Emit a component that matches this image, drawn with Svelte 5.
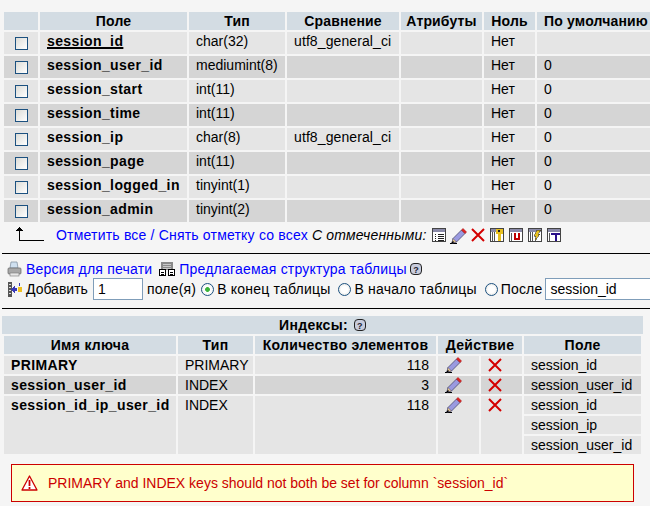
<script>
    const fields = [
        { name: 'session_id', type: 'char(32)', coll: 'utf8_general_ci', def: '', key: true },
        { name: 'session_user_id', type: 'mediumint(8)', coll: '', def: '0' },
        { name: 'session_start', type: 'int(11)', coll: '', def: '0' },
        { name: 'session_time', type: 'int(11)', coll: '', def: '0' },
        { name: 'session_ip', type: 'char(8)', coll: 'utf8_general_ci', def: '0' },
        { name: 'session_page', type: 'int(11)', coll: '', def: '0' },
        { name: 'session_logged_in', type: 'tinyint(1)', coll: '', def: '0' },
        { name: 'session_admin', type: 'tinyint(2)', coll: '', def: '0' },
    ];
</script>

{#snippet pencil()}
    <svg class="ico" width="17" height="16" viewBox="0 0 17 16">
        <path d="M0 15.500h7" stroke="#000" stroke-width="1"/>
        <path d="M3 10.500 11.500 2l3.500 3.500L6.500 14 2 15z" fill="#9a9ae0" stroke="#4a4a70" stroke-width=".8"/>
        <path d="M3 10.500l3.500 3.500L2 15z" fill="#e8c890" stroke="#4a4a70" stroke-width=".5"/>
        <path d="M2 15l1.500-1.500" stroke="#000" stroke-width="1.500"/>
        <path d="M11.500 2l1.500-1.500 3.500 3.500L15 5.500z" fill="#e82020" stroke="#a01010" stroke-width=".6"/>
    </svg>
{/snippet}

{#snippet cross()}
    <svg class="ico" width="14" height="14" viewBox="0 0 14 14">
        <path d="M1 1 13 13M13 1 1 13" stroke="#d40000" stroke-width="2"/>
    </svg>
{/snippet}

{#snippet help()}
    <svg class="ico" width="12" height="12" viewBox="0 0 12 12">
        <rect x=".5" y=".5" width="11" height="11" rx="3.500" fill="#c8ccdc" stroke="#222"/>
        <text x="6" y="9.500" font-size="9" font-weight="bold" text-anchor="middle" fill="#223">?</text>
    </svg>
{/snippet}

{#snippet tableicon(kind)}
    <svg class="ico" width="14" height="14" viewBox="0 0 14 14" shape-rendering="crispEdges">
        <rect x=".5" y=".5" width="13" height="13" fill="#fff" stroke="#444"/>
        <rect x="1" y="1" width="12" height="3" fill="#8a8aa8"/>
        {#if kind === 'list'}
            <path d="M3 6h1M3 8h1M3 10h1M3 12h1M5.500 6h6M5.500 8h6M5.500 10h6M5.500 12h6" stroke="#222"/>
        {:else if kind === 'key'}
            <path d="M2 4v9M4 4v9" stroke="#555"/>
            <rect x="6" y="1" width="7" height="5" fill="#e8c020"/>
            <rect x="8" y="5" width="3" height="8" fill="#e8c020"/>
            <rect x="8" y="2" width="2" height="2" fill="#222"/>
        {:else if kind === 'unique'}
            <path d="M2 5v8" stroke="#555"/>
            <path d="M5 5h2v5h2V5h2v7H5z" fill="#c00000"/>
        {:else if kind === 'fulltext'}
            <path d="M2 4v9M4 4v9" stroke="#555"/>
            <path d="M9 2h4l-3 4h2l-5 7 1-5H6z" fill="#e8c020" stroke="#222" stroke-width=".5"/>
        {:else}
            <path d="M2 5v8" stroke="#555"/>
            <path d="M4 5h9v2h-3v6H8V7H4z" fill="#2a108a"/>
        {/if}
    </svg>
{/snippet}

<div class="page">
    <table class="fields">
        <colgroup>
            <col style="width:34px" /><col style="width:147px" /><col style="width:96px" /><col style="width:112px" />
            <col style="width:81px" /><col style="width:51px" /><col style="width:118px" />
        </colgroup>
        <thead>
            <tr>
                <th></th>
                <th>Поле</th>
                <th>Тип</th>
                <th>Сравнение</th>
                <th>Атрибуты</th>
                <th>Ноль</th>
                <th>По умолчанию</th>
            </tr>
        </thead>
        <tbody>
            {#each fields as f, i}
                <tr class={i % 2 ? 'even' : 'odd'}>
                    <td class="check"><input type="checkbox" class="box" /></td>
                    <td class="name" class:key={f.key}>{f.name}</td>
                    <td>{f.type}</td>
                    <td class="coll">{f.coll}</td>
                    <td></td>
                    <td>Нет</td>
                    <td>{f.def}</td>
                </tr>
            {/each}
        </tbody>
    </table>

    <div class="checkall">
        <svg class="arrow" width="29" height="16" viewBox="0 0 29 16" shape-rendering="crispEdges">
            <path d="M4 1h1v1h1v1h1v1h1v1H1V4h1V3h1V2h1z" fill="#000"/>
            <path d="M4 5h1v9h24v1H4z" fill="#000"/>
        </svg>
        <a class="lnk" href="#all">Отметить все</a>
        <span class="slash">/</span>
        <a class="lnk" href="#none">Снять отметку со всех</a>
        <em>С отмеченными:</em>
        <span class="actions">
            {@render tableicon('list')}
            {@render pencil()}
            {@render cross()}
            {@render tableicon('key')}
            {@render tableicon('unique')}
            {@render tableicon('fulltext')}
            {@render tableicon('text')}
        </span>
    </div>

    <hr />

    <div class="tools">
        <div class="row">
            <svg class="ico printer" width="15" height="16" viewBox="0 0 15 16">
                <path d="M4 1h6l1 6H3z" fill="#cfe0f0" stroke="#7a8a9a" stroke-width=".7"/>
                <rect x="1" y="7" width="13" height="6" rx="1" fill="#a8a8a8" stroke="#666" stroke-width=".7"/>
                <rect x="3" y="12" width="9" height="3" fill="#e8e8e8" stroke="#777" stroke-width=".6"/>
            </svg>
            <a class="lnk" href="#print">Версия для печати</a>
            <svg class="ico propose" width="16" height="14" viewBox="0 0 16 14" shape-rendering="crispEdges">
                <rect x="2" y="0" width="12" height="8" fill="#8a8a8a"/>
                <path d="M4 2h8M4 4h8M4 6h8" stroke="#c8c8c8"/>
                <rect x=".5" y="7.500" width="6" height="6" fill="#fff" stroke="#000"/>
                <rect x="9.500" y="7.500" width="6" height="6" fill="#fff" stroke="#000"/>
                <path d="M2 10h3M11 10h3M2 12h3M11 12h3" stroke="#000"/>
            </svg>
            <a class="lnk" href="#propose">Предлагаемая структура таблицы</a>
            <span class="helpwrap">{@render help()}</span>
        </div>
        <div class="row addrow">
            <svg class="ico addfield" width="15" height="15" viewBox="0 0 15 15" shape-rendering="crispEdges">
                <path d="M1 0h4v15H1z" fill="#555"/>
                <path d="M2 2h2M2 5h2M2 8h2M2 11h2" stroke="#ddd"/>
                <path d="M4 7l4-4v3h2v3H8v3z" fill="#3a3ab8"/>
                <rect x="11" y="5" width="4" height="5" fill="#f0c020"/>
                <rect x="12" y="1" width="1" height="3" fill="#3a3ab8"/>
            </svg>
            <label class="addlabel" for="num">Добавить</label>
            <input id="num" class="txt num" type="text" value="1" />
            <span class="unit">поле(я)</span>
            <label class="pos"><input type="radio" name="where" class="radio" checked />В конец таблицы</label>
            <label class="pos"><input type="radio" name="where" class="radio" />В начало таблицы</label>
            <label class="pos"><input type="radio" name="where" class="radio" />После</label>
            <input class="txt after" type="text" value="session_id" />
        </div>
    </div>

    <hr />

    <div class="indexhead">Индексы: <span class="helpwrap">{@render help()}</span></div>
    <table class="indexes">
        <colgroup>
            <col style="width:172px" /><col style="width:75px" /><col style="width:181px" />
            <col style="width:41px" /><col style="width:41px" /><col style="width:117px" />
        </colgroup>
        <thead>
            <tr>
                <th>Имя ключа</th>
                <th>Тип</th>
                <th>Количество элементов</th>
                <th colspan="2">Действие</th>
                <th>Поле</th>
            </tr>
        </thead>
        <tbody>
            <tr class="odd">
                <td class="name">PRIMARY</td>
                <td>PRIMARY</td>
                <td class="num-cell">118</td>
                <td class="act">{@render pencil()}</td>
                <td class="act del">{@render cross()}</td>
                <td>session_id</td>
            </tr>
            <tr class="even">
                <td class="name">session_user_id</td>
                <td>INDEX</td>
                <td class="num-cell">3</td>
                <td class="act">{@render pencil()}</td>
                <td class="act del">{@render cross()}</td>
                <td>session_user_id</td>
            </tr>
            <tr class="odd">
                <td class="name" rowspan="3">session_id_ip_user_id</td>
                <td rowspan="3">INDEX</td>
                <td class="num-cell" rowspan="3">118</td>
                <td class="act" rowspan="3">{@render pencil()}</td>
                <td class="act del" rowspan="3">{@render cross()}</td>
                <td>session_id</td>
            </tr>
            <tr class="odd"><td>session_ip</td></tr>
            <tr class="odd"><td>session_user_id</td></tr>
        </tbody>
    </table>

    <div class="warning">
        <svg class="ico" width="17" height="16" viewBox="0 0 17 16">
            <path d="M8.500 1 16 15H1z" fill="#fff" stroke="#cc0000" stroke-width="1.300" stroke-linejoin="round"/>
            <path d="M8.500 5v6M8.500 12v2" stroke="#cc0000" stroke-width="1.800"/>
        </svg>
        <span>PRIMARY and INDEX keys should not both be set for column `session_id`</span>
    </div>
</div>

<style>
    :global(body) {
        margin: 0;
        background: #f5f5f5;
    }

    .page {
        width: 650px;
        height: 506px;
        overflow: hidden;
        padding-top: 10px;
        box-sizing: border-box;
        font-family: "Liberation Sans", Arial, sans-serif;
        font-size: 14px;
        color: #000;
    }

    table {
        table-layout: fixed;
        border-collapse: separate;
        border-spacing: 2px;
        margin-left: 2px;
    }

    .fields {
        width: 655px;
    }

    .indexes {
        width: 641px;
    }

    th {
        background: #d3dce3;
        height: 18px;
        padding: 0;
        font-weight: bold;
        text-align: center;
        white-space: nowrap;
        letter-spacing: 0.15px;
    }

    .indexes th {
        letter-spacing: 0.3px;
    }

    td {
        box-sizing: border-box;
        padding: 0 7px;
        vertical-align: top;
        white-space: nowrap;
        line-height: 18px;
    }

    .fields td {
        height: 22px;
    }

    .indexes td {
        height: 18px;
    }

    .odd td {
        background: #e5e5e5;
    }

    .even td {
        background: #d5d5d5;
    }

    .name {
        font-weight: bold;
        letter-spacing: 0.4px;
    }

    .coll {
        letter-spacing: 0.1px;
    }

    .key {
        text-decoration: underline;
        text-decoration-thickness: 2px;
    }

    .fields .check {
        padding: 5px 0 0 11px;
    }

    .box {
        appearance: none;
        display: block;
        width: 13px;
        height: 13px;
        margin: 0;
        border: 1px solid #1c5180;
        box-sizing: border-box;
        background: linear-gradient(135deg, #dcdcd7, #fff);
    }

    .checkall {
        display: flex;
        align-items: flex-start;
        height: 29px;
        padding-left: 15px;
        line-height: 16px;
        letter-spacing: 0.2px;
    }

    .arrow {
        margin: 2px 12px 0 0;
    }

    .checkall .lnk, .slash, .checkall em {
        margin-top: 3px;
    }

    .slash {
        margin-left: 4px;
        margin-right: 4px;
        color: #00f;
    }

    .checkall em {
        margin-left: 4px;
    }

    .actions {
        display: flex;
        gap: 5px;
        margin: 4px 0 0 5px;
    }

    .actions :global(svg:nth-child(2)) {
        margin-left: -1px;
        margin-right: -1px;
    }

    .lnk {
        color: #00f;
        text-decoration: none;
    }

    .ico {
        display: block;
        flex: none;
    }

    hr {
        margin: 0 0 0 2px;
        border: none;
        border-top: 1px solid #000;
        height: 0;
    }

    .tools {
        height: 54px;
        box-sizing: border-box;
        padding: 5px 0 0 7px;
        letter-spacing: 0.2px;
    }

    .row {
        display: flex;
        align-items: center;
        height: 19px;
        white-space: nowrap;
    }

    .printer {
        margin-right: 4px;
    }

    .propose {
        margin: 0 4px 0 7px;
    }

    .helpwrap {
        display: inline-block;
        margin-left: 3px;
    }

    .addrow {
        height: 22px;
    }

    .addfield {
        margin-right: 4px;
    }

    .addlabel {
        letter-spacing: 0;
    }

    .txt {
        height: 22px;
        box-sizing: border-box;
        border: 1px solid #7f9db9;
        background: #fff;
        padding: 0 4px;
        margin: 0;
        font: inherit;
        color: #000;
    }

    .num {
        width: 50px;
        margin-left: 5px;
    }

    .unit {
        margin: 0 5px 0 4px;
    }

    .pos {
        display: flex;
        align-items: center;
        margin-right: 8px;
    }

    .radio {
        appearance: none;
        width: 13px;
        height: 13px;
        margin: 0 3px 0 0;
        box-sizing: border-box;
        border: 1px solid #1c5180;
        border-radius: 50%;
        background: radial-gradient(circle, #fff 40%, #dcdcd7);
    }

    .radio:checked {
        background: radial-gradient(circle, #3cb43c 0, #3cb43c 27%, #fff 33%, #eee);
    }

    .after {
        width: 120px;
        margin-left: -5px;
    }

    .indexhead {
        display: flex;
        align-items: center;
        justify-content: center;
        width: 641px;
        height: 18px;
        margin: 7px 0 0 2px;
        background: #d3dce3;
        font-weight: bold;
        box-sizing: border-box;
        letter-spacing: 0.3px;
    }

    .indexhead .helpwrap {
        margin-left: 6px;
    }

    .num-cell {
        text-align: right;
    }

    .indexes .act {
        padding: 1px 0 0 7px;
    }

    .indexes .del {
        padding-top: 2px;
    }

    .warning {
        display: flex;
        align-items: center;
        gap: 10px;
        width: 623px;
        height: 38px;
        box-sizing: border-box;
        margin: 8px 0 0 11px;
        padding-left: 9px;
        border: 1px solid #cc0000;
        background: #ffffcc;
        color: #cc0000;
    }
</style>
